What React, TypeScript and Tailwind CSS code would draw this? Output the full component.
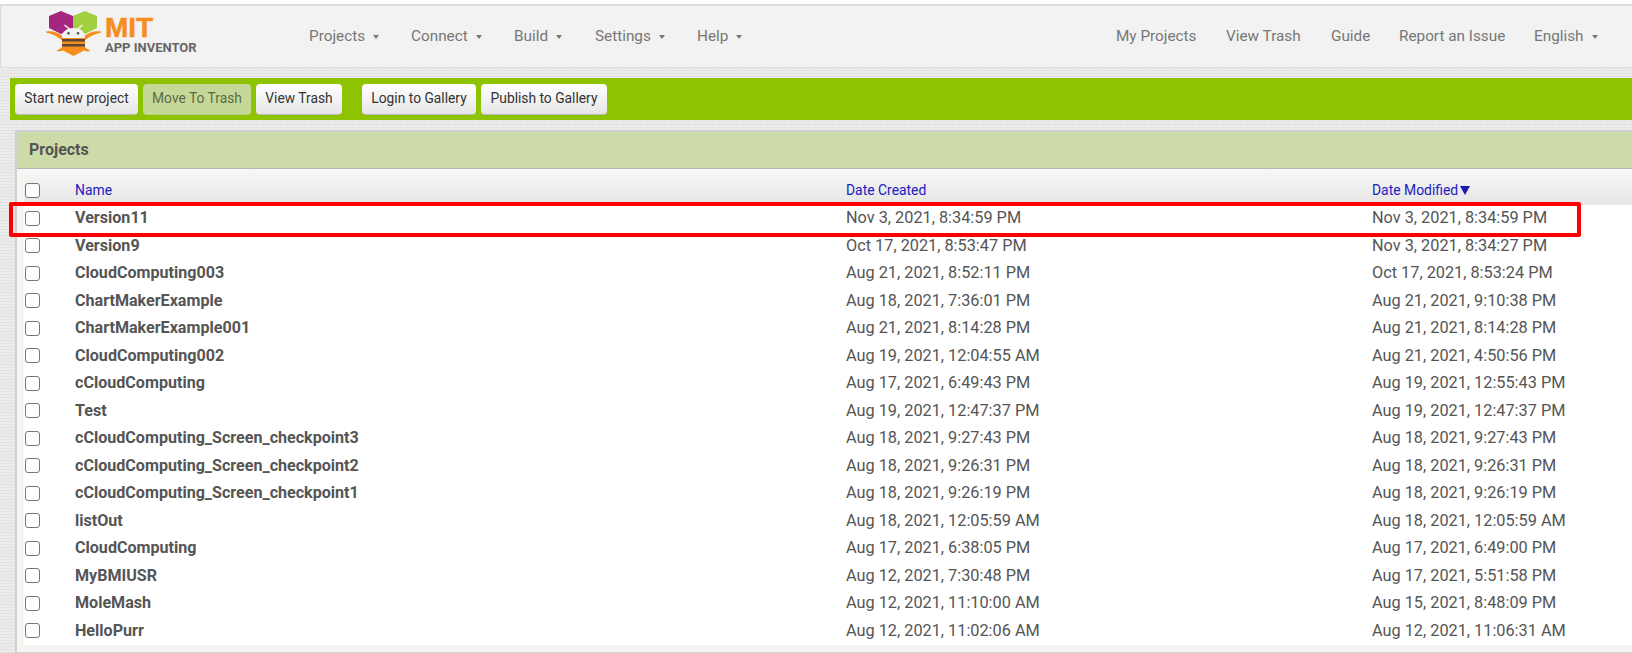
const rows = [
  ["Version11", "Nov 3, 2021, 8:34:59 PM", "Nov 3, 2021, 8:34:59 PM"],
  ["Version9", "Oct 17, 2021, 8:53:47 PM", "Nov 3, 2021, 8:34:27 PM"],
  ["CloudComputing003", "Aug 21, 2021, 8:52:11 PM", "Oct 17, 2021, 8:53:24 PM"],
  ["ChartMakerExample", "Aug 18, 2021, 7:36:01 PM", "Aug 21, 2021, 9:10:38 PM"],
  ["ChartMakerExample001", "Aug 21, 2021, 8:14:28 PM", "Aug 21, 2021, 8:14:28 PM"],
  ["CloudComputing002", "Aug 19, 2021, 12:04:55 AM", "Aug 21, 2021, 4:50:56 PM"],
  ["cCloudComputing", "Aug 17, 2021, 6:49:43 PM", "Aug 19, 2021, 12:55:43 PM"],
  ["Test", "Aug 19, 2021, 12:47:37 PM", "Aug 19, 2021, 12:47:37 PM"],
  ["cCloudComputing_Screen_checkpoint3", "Aug 18, 2021, 9:27:43 PM", "Aug 18, 2021, 9:27:43 PM"],
  ["cCloudComputing_Screen_checkpoint2", "Aug 18, 2021, 9:26:31 PM", "Aug 18, 2021, 9:26:31 PM"],
  ["cCloudComputing_Screen_checkpoint1", "Aug 18, 2021, 9:26:19 PM", "Aug 18, 2021, 9:26:19 PM"],
  ["listOut", "Aug 18, 2021, 12:05:59 AM", "Aug 18, 2021, 12:05:59 AM"],
  ["CloudComputing", "Aug 17, 2021, 6:38:05 PM", "Aug 17, 2021, 6:49:00 PM"],
  ["MyBMIUSR", "Aug 12, 2021, 7:30:48 PM", "Aug 17, 2021, 5:51:58 PM"],
  ["MoleMash", "Aug 12, 2021, 11:10:00 AM", "Aug 15, 2021, 8:48:09 PM"],
  ["HelloPurr", "Aug 12, 2021, 11:02:06 AM", "Aug 12, 2021, 11:06:31 AM"],
];

function Caret() {
  return <span className="ml-[8px] inline-block w-0 h-0 border-l-[3px] border-r-[3px] border-t-[4px] border-l-transparent border-r-transparent border-t-[#777]" />;
}

function NavItem({ label, caret, width }: { label: string; caret?: boolean; width: string }) {
  return (
    <div className={`flex items-center text-[15.3px] text-[#777] ${width}`}>
      {label}
      {caret && <Caret />}
    </div>
  );
}

function Logo() {
  return (
    <div className="relative w-[160px] h-[51px] ml-[45px]">
      <svg width="58" height="48" viewBox="0 0 58 48" className="absolute left-0 top-0">
        <polygon points="15,0 27,5 27,17 15,23 3,17 3,5" fill="#a6267f" />
        <polygon points="39,0 51,5 51,17 39,23 27,17 27,5" fill="#a0cf3f" />
        <path d="M0 20.5 C7 19.5 12 21 18 26 L17 30 C12 26 7 23 0 21.5 Z" fill="#f68d1e" />
        <path d="M55 20.5 C48 19.5 43 21 37 26 L38 30 C43 26 48 23 55 21.5 Z" fill="#f68d1e" />
        <path d="M11 39 C13 39 15 37 17 35 L19 38 C16 40 14 41 11 40 Z" fill="#f68d1e" />
        <path d="M44 39 C42 39 40 37 38 35 L36 38 C39 40 41 41 44 40 Z" fill="#f68d1e" />
        <polygon points="16,26 39,26 39,39 27.5,45 16,39" fill="#f68d1e" />
        <rect x="16" y="28" width="23" height="2.5" fill="#5b4a3a" />
        <rect x="16" y="33" width="23" height="2.5" fill="#5b4a3a" />
        <path d="M16 27 C16 20 21 17 27.5 17 C34 17 39 20 39 27 Z" fill="#f3f3f3" />
        <circle cx="22.5" cy="22.3" r="1.3" fill="#555" />
        <circle cx="32" cy="22.3" r="1.3" fill="#555" />
        <path d="M23.5 18 L18.5 14 M31.5 18 L36.5 14" stroke="#f5f5f5" strokeWidth="1.5" />
      </svg>
      <span className="absolute left-[59px] top-[3px] text-[28px] leading-[28px] font-bold text-[#f68d1e] [-webkit-text-stroke:0.5px_#f68d1e] font-['Liberation_Sans',sans-serif]">MIT</span>
      <span className="absolute left-[59px] top-[30px] text-[13px] leading-[14px] font-bold text-[#666] whitespace-nowrap font-['Roboto',sans-serif]">APP INVENTOR</span>
    </div>
  );
}

function Btn({ label, width, off }: { label: string; width: string; off?: boolean }) {
  return (
    <div
      className={`h-[31px] flex items-center justify-center rounded-[4px] text-[13.8px] border-b ${width} ${
        off
          ? "bg-[#c6d898] text-[#5b6b45] border-[#b9cc88]"
          : "bg-gradient-to-b from-white to-[#e6e6e6] text-[#333] border-[#bbb]"
      }`}
    >
      {label}
    </div>
  );
}

function Check() {
  return <div className="w-[15px] h-[15px] rounded-[3px] border-[1.5px] border-[#767676] bg-white" />;
}

export default function App() {
  return (
    <div className="relative w-[1632px] h-[653px] overflow-hidden pt-1 font-['Roboto',sans-serif] bg-white">
      <div className="h-full bg-[#e9e9e9] bg-[repeating-linear-gradient(0deg,#e1e1e1_0_1px,transparent_1px_3px),repeating-linear-gradient(90deg,#f1f1f1_0_1px,transparent_1px_3px)]">
        <header className="h-[64px] flex items-center bg-[#f2f2f2] border-t-2 border-b border-l border-[#dcdcdc]">
          <Logo />
          <nav className="flex ml-[103px]">
            <NavItem label="Projects" caret width="w-[102px]" />
            <NavItem label="Connect" caret width="w-[103px]" />
            <NavItem label="Build" caret width="w-[81px]" />
            <NavItem label="Settings" caret width="w-[102px]" />
            <NavItem label="Help" caret width="w-[60px]" />
          </nav>
          <nav className="flex ml-auto pr-[22px]">
            <NavItem label="My Projects" width="w-[110px]" />
            <NavItem label="View Trash" width="w-[105px]" />
            <NavItem label="Guide" width="w-[68px]" />
            <NavItem label="Report an Issue" width="w-[135px]" />
            <NavItem label="English" caret width="w-[76px]" />
          </nav>
        </header>

        <div className="ml-[10px] mt-[10px] h-[42px] bg-[#8dc300] flex items-center pl-[5px] gap-[5px]">
          <Btn label="Start new project" width="w-[123px]" />
          <Btn label="Move To Trash" width="w-[108px]" off />
          <Btn label="View Trash" width="w-[86px]" />
          <div className="w-[10px]" />
          <Btn label="Login to Gallery" width="w-[114px]" />
          <Btn label="Publish to Gallery" width="w-[126px]" />
        </div>

        <section className="ml-[15px] mt-[10px] h-[523px] bg-[#f5f5f1] border-t-2 border-l-2 border-b border-[#d0d0d0]">
          <h2 className="h-[37px] flex items-center pl-[12px] bg-[#cddba8] border-b border-[#b5b5b5] text-[16px] font-bold text-[#555]">Projects</h2>
          <div className="ml-[7px] mr-0 bg-white">
            <div className="h-[35.5px] flex items-center bg-gradient-to-b from-[#f7f7f5] to-[#e6e6e6] text-[13.9px] text-[#2020c0] pt-[8px]">
              <div className="w-[51px] pl-[1px]"><Check /></div>
              <div className="w-[771px]">Name</div>
              <div className="w-[526px]">Date Created</div>
              <div className="flex items-center">Date Modified<span className="ml-[2px] w-0 h-0 border-l-[5px] border-r-[5px] border-t-[9px] border-l-transparent border-r-transparent border-t-[#1a1ab5]" /></div>
            </div>
            {rows.map((r) => (
              <div key={r[0]} className="h-[27.5px] flex items-center text-[16.3px] text-[#555]">
                <div className="w-[51px] pl-[1px]"><Check /></div>
                <div className="w-[771px] font-bold text-[16.1px]">{r[0]}</div>
                <div className="w-[526px]">{r[1]}</div>
                <div>{r[2]}</div>
              </div>
            ))}
          </div>
        </section>
      </div>
      <div className="absolute left-[9px] top-[202px] w-[1572px] h-[35px] border-4 border-[#ff0000] rounded-[2px]" />
    </div>
  );
}
